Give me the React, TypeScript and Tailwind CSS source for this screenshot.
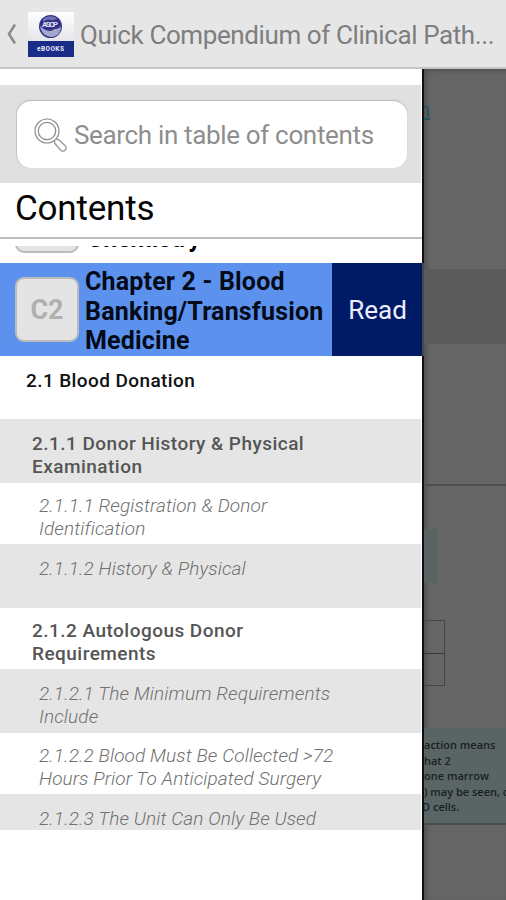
import clsx from 'clsx';

type Level = 'section' | 'topic' | 'entry';

type TocRow = {
  level: Level;
  lines: string[];
  size: string;
  shaded?: boolean;
};

const rows: TocRow[] = [
  { level: 'section', size: 'h-[63px] pt-[13px]', lines: ['2.1 Blood Donation'] },
  {
    level: 'topic',
    size: 'h-[64px] pt-[13px]',
    shaded: true,
    lines: ['2.1.1 Donor History & Physical', 'Examination'],
  },
  {
    level: 'entry',
    size: 'h-[61px] pt-[11px]',
    lines: ['2.1.1.1 Registration & Donor', 'Identification'],
  },
  {
    level: 'entry',
    size: 'h-[64px] pt-[13px]',
    shaded: true,
    lines: ['2.1.1.2 History & Physical'],
  },
  {
    level: 'topic',
    size: 'h-[61px] pt-[11px]',
    lines: ['2.1.2 Autologous Donor', 'Requirements'],
  },
  {
    level: 'entry',
    size: 'h-[64px] pt-[13px]',
    shaded: true,
    lines: ['2.1.2.1 The Minimum Requirements', 'Include'],
  },
  {
    level: 'entry',
    size: 'h-[61px] pt-[11px]',
    lines: ['2.1.2.2 Blood Must Be Collected >72', 'Hours Prior To Anticipated Surgery'],
  },
  {
    level: 'entry',
    size: 'h-[36px] pt-[13px]',
    shaded: true,
    lines: ['2.1.2.3 The Unit Can Only Be Used'],
  },
];

const levelStyles: Record<Level, string> = {
  section: 'pl-[26px] text-[19px] tracking-[0.4px] font-medium text-[#111]',
  topic: 'pl-[32px] text-[19px] tracking-[0.47px] font-medium text-[#555]',
  entry: 'pl-[39px] text-[19px] tracking-[0.1px] font-light italic text-[#707070]',
};

export default function App() {
  return (
    <div className="flex h-[900px] w-[506px] flex-col overflow-hidden bg-[#666] font-[Roboto,sans-serif]">
      <Header />
      <div className="flex min-h-0 flex-1">
        <Drawer />
        <PageBehind />
      </div>
    </div>
  );
}

function Header() {
  return (
    <header className="flex h-[69px] shrink-0 items-center border-b-2 border-[#c4c4c4] bg-[#e6e6e6] pl-[6px]">
      <svg className="h-[22px] w-[11px] shrink-0" viewBox="0 0 11 22" fill="none">
        <path d="M9 1.500 3 11l6 9.500" stroke="#8c8c8c" strokeWidth="2.6" />
      </svg>
      <Logo />
      <h1 className="ml-[6px] pt-[4px] text-[26px] tracking-[-0.4px] whitespace-nowrap text-[#7e7e7e]">
        Quick Compendium of Clinical Path...
      </h1>
    </header>
  );
}

function Logo() {
  return (
    <svg className="mt-px ml-[11px] h-[45px] w-[46px] shrink-0" viewBox="0 0 46 45">
      <defs>
        <linearGradient id="paper" x1="0" y1="0" x2="0" y2="1">
          <stop offset="0" stopColor="#fff" />
          <stop offset="1" stopColor="#e4e4ea" />
        </linearGradient>
      </defs>
      <rect width="46" height="30" fill="url(#paper)" />
      <rect y="29" width="46" height="16" fill="#182c88" />
      <circle cx="22.5" cy="14.5" r="11.5" fill="#30328a" />
      <path d="M12 14c1 7 6 11 12 11 6-1 9-5 9-11-2 4-6 2-8 4s-8 1-13-4Z" fill="#a4a8cc" />
      <path d="M15 7.500c4-4 10-4 14-1l-4 2-5-1-5 2Z" fill="#7074ae" />
      <text x="22" y="15" textAnchor="middle" fontSize="8" fontWeight="700" fill="#e0e0f0" textLength="16">
        ASCP
      </text>
      <text x="22.5" y="38.5" textAnchor="middle" fontSize="6.5" fontWeight="900" fill="#d8dcf2" textLength="27">
        eBOOKS
      </text>
    </svg>
  );
}

function Drawer() {
  return (
    <nav className="flex w-[424px] shrink-0 flex-col border-r-2 border-[#101010] bg-white">
      <div className="mt-4 mr-px flex h-[98px] shrink-0 bg-[#e0e0e0] pt-4 pr-[14px] pl-[17px]">
        <div className="flex h-[67px] flex-1 items-center rounded-[14px] bg-white pl-[17px] shadow-[0_-1px_1px_#b5b5b5,-1px_0_1px_#c4c4c4]">
          <SearchIcon />
          <span className="ml-[6px] pt-[2px] text-[26px] tracking-[-0.34px] whitespace-nowrap text-[#8e8e8e]">
            Search in table of contents
          </span>
        </div>
      </div>
      <h2 className="h-[56px] shrink-0 border-b-2 border-[#bdbdbd] pt-[5px] pl-[15px] text-[35px] leading-[41px] tracking-[-0.2px] text-[#050505]">
        Contents
      </h2>
      {/* previous chapter, scrolled almost out of the list */}
      <div className="mt-[7px] flex h-[17px] shrink-0 items-end overflow-hidden pl-[15px]">
        <Badge className="mb-[10px]">C1</Badge>
        <span className="mb-[10px] ml-[8px] text-[25px] leading-[29px] font-bold tracking-[-0.2px] text-black">
          Chemistry
        </span>
      </div>
      <div className="flex h-[93px] shrink-0 bg-[#5c92ee]">
        <div className="flex w-[332px] shrink-0 items-center pl-[15px]">
          <Badge>C2</Badge>
          <div className="ml-[6px] pt-[4px] text-[25px] leading-[29.4px] font-bold tracking-[0.18px] whitespace-nowrap text-[#040a18]">
            <p>Chapter 2 - Blood</p>
            <p>Banking/Transfusion</p>
            <p>Medicine</p>
          </div>
        </div>
        <button className="flex-1 bg-[#001a66] pt-[2px] pl-px text-[26px] text-[#eef]">
          Read
        </button>
        <div className="-mr-[2px] w-[2px] bg-[#484848]" />
      </div>
      {rows.map((row) => (
        <div
          key={row.lines[0]}
          className={clsx(
            'mr-px shrink-0 overflow-hidden leading-[23px] whitespace-nowrap',
            row.size,
            row.shaded && 'bg-[#e5e5e5]',
            levelStyles[row.level],
          )}
        >
          {row.lines.map((line) => (
            <p key={line}>{line}</p>
          ))}
        </div>
      ))}
    </nav>
  );
}

function Badge({ children, className }: { children: string; className?: string }) {
  return (
    <div
      className={clsx(
        'flex h-[65px] w-[64px] shrink-0 items-center justify-center rounded-[9px] border-2 border-[#bcbcbc] bg-[#e4e4e4] pt-[2px] text-[27px] font-bold text-[#b0b0b0]',
        className,
      )}
    >
      {children}
    </div>
  );
}

function SearchIcon() {
  return (
    <svg className="h-[34px] w-[34px] shrink-0" viewBox="0 0 34 34" fill="none" stroke="#8c8c8c" strokeWidth="1.2">
      <circle cx="13" cy="13" r="12" />
      <circle cx="13" cy="13" r="8.7" />
      <path d="M20.500 22.800c-.5 1.500.2 2.600 1.200 3.700l5 5.700c1.300 1.400 3 1.300 4.400 0s1.500-2.900.2-4.300l-5.500-5.200c-1.200-1-2.300-1.700-3.500-1.200" />
    </svg>
  );
}

// The book page dimmed behind the open drawer
function PageBehind() {
  return (
    <main className="flex min-w-0 flex-1 flex-col overflow-hidden bg-[#666] shadow-[inset_6px_0_6px_-4px_#4d4d4d,inset_0_5px_5px_-4px_#4d4d4d]">
      <div className="mt-[29px] -ml-[5px] h-[24px] text-[20px] leading-[24px] text-[#1d5363] underline">
        n
      </div>
      <div className="mt-[147px] h-[75px] shrink-0 bg-[#5b5b5b]" />
      <div className="mt-[140px] h-[2px] shrink-0 bg-[#4e4e4e]" />
      <div className="mt-[43px] h-[54px] w-[13px] shrink-0 bg-[#5a6263]" />
      <div className="mt-[37px] h-[66px] w-[21px] shrink-0 border border-l-0 border-[#464646]">
        <div className="h-[33px] border-b border-[#383838]" />
      </div>
      <div className="mt-[42px] h-[97px] shrink-0 border-b-2 border-[#4c4c4c] bg-[#596464] pt-[9px] font-['Open_Sans',sans-serif] text-[11px] leading-[15.500px] font-semibold whitespace-nowrap text-[#1c1f1f]">
        <p>action means</p>
        <p>hat 2</p>
        <p>one marrow</p>
        <p>) may be seen, o</p>
        <p className="-ml-[2px]">D cells.</p>
      </div>
    </main>
  );
}
